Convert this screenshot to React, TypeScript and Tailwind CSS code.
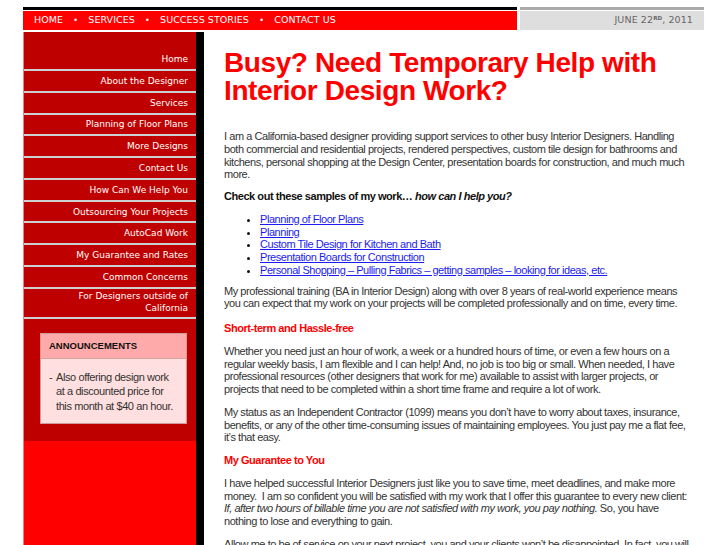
import React from "react";

const sideLinks = [
  "About the Designer",
  "Services",
  "Planning of Floor Plans",
  "More Designs",
  "Contact Us",
  "How Can We Help You",
  "Outsourcing Your Projects",
  "AutoCad Work",
  "My Guarantee and Rates",
  "Common Concerns",
];

const samples = [
  "Planning of Floor Plans",
  "Planning",
  "Custom Tile Design for Kitchen and Bath",
  "Presentation Boards for Construction",
  "Personal Shopping – Pulling Fabrics – getting samples – looking for ideas, etc.",
];

const topNav = ["HOME", "SERVICES", "SUCCESS STORIES", "CONTACT US"];

export default function App() {
  return (
    <div className="min-h-[545px] bg-white pt-[7px]">
      <div className="ml-[23px] w-[681px]">
        {/* Top bar */}
        <div className="flex gap-[3px]">
          <div className="w-[494px] border-t-[3px] border-black">
            <div className="mt-px flex h-[19px] items-center bg-[#ff0000] pl-[11px] text-[9.5px] tracking-[0.05px] text-white [font-family:'DejaVu_Sans',sans-serif]">
              {topNav.map((item, i) => (
                <React.Fragment key={item}>
                  {i > 0 && <span className="mx-[10.25px] text-[8px]">•</span>}
                  <span>{item}</span>
                </React.Fragment>
              ))}
            </div>
          </div>
          <div className="w-[184px] border-t-[3px] border-[#aaa]">
            <div className="mt-px flex h-[19px] items-center justify-end bg-[#dedede] pr-[11px] text-[9.5px] tracking-[0.1px] text-[#666] [font-family:'DejaVu_Sans',sans-serif]">
              JUNE 22<sup className="text-[5.5px] font-bold">RD</sup>, 2011
            </div>
          </div>
        </div>

        <div className="mt-[2px] flex">
          {/* Sidebar */}
          <div className="w-[173px] shrink-0 border-l border-[#f08080] bg-[#ff0000]">
            <div className="bg-[#bf0000] pb-[17px]">
              <nav className="text-right text-[9px] leading-[12px] text-white [font-family:'DejaVu_Sans',sans-serif]">
                <a className="block border-b-2 border-[#cfcfcf] pb-[4px] pr-[8px] pt-[21px]">Home</a>
                {sideLinks.map((l) => (
                  <a key={l} className="block border-b-2 border-[#cfcfcf] py-[3.9px] pr-[8px]">
                    {l}
                  </a>
                ))}
                <a className="block border-b-2 border-[#cfcfcf] pb-[2px] pt-px pr-[8px] leading-[12.5px]">
                  For Designers outside of
                  <br />
                  California
                </a>
              </nav>
              <div className="ml-[16px] mt-[14px] w-[147px] border border-[#d49a9a] [font-family:'Liberation_Sans',Arial,sans-serif]">
                <div className="flex h-[25px] items-center border-b border-[#d9a0a0] bg-[#ffaaaa] pl-[8px] text-[9.5px] font-bold text-[#111]">
                  ANNOUNCEMENTS
                </div>
                <div className="bg-[#ffdfdf] pb-[10px] pl-[8px] pt-[11px] text-[11px] leading-[14.5px] tracking-[-0.4px] text-[#333]">
                  <div className="flex">
                    <span className="w-[7px] shrink-0">-</span>
                    <span className="w-[120px]">
                      Also offering design work at a discounted price for this month at $40 an hour.
                    </span>
                  </div>
                </div>
              </div>
            </div>
          </div>
          <div className="w-[8px] shrink-0 bg-black" />

          {/* Content */}
          <main className="flex-1 pl-[20px] pr-[12px] pt-[17px] text-[11px] leading-[12.75px] tracking-[-0.45px] text-[#333] [font-family:'Liberation_Sans',Arial,sans-serif]">
            <h1 className="text-[28px] font-bold leading-[28px] tracking-[-0.4px] text-[#ff0000]">
              Busy? Need Temporary Help with Interior Design Work?
            </h1>
            <p className="mt-[25px]">
              I am a California-based designer providing support services to other busy Interior Designers. Handling
              both commercial and residential projects, rendered perspectives, custom tile design for bathrooms and
              kitchens, personal shopping at the Design Center, presentation boards for construction, and much much
              more.
            </p>
            <p className="mt-[9px] font-bold text-[#111]">
              Check out these samples of my work… <em>how can I help you?</em>
            </p>
            <ul className="mt-[10px] list-disc pl-[36px] text-[#1c1cf0]">
              {samples.map((s) => (
                <li key={s} className="marker:text-[#111]">
                  <a className="underline">{s}</a>
                </li>
              ))}
            </ul>
            <p className="mt-[8px]">
              My professional training (BA in Interior Design) along with over 8 years of real-world experience means
              you can expect that my work on your projects will be completed professionally and on time, every time.
            </p>
            <p className="mt-[12px] font-bold text-[#ff0000]">Short-term and Hassle-free</p>
            <p className="mt-[10px]">
              Whether you need just an hour of work, a week or a hundred hours of time, or even a few hours on a
              regular weekly basis, I am flexible and I can help! And, no job is too big or small. When needed, I have
              professional resources (other designers that work for me) available to assist with larger projects, or
              projects that need to be completed within a short time frame and require a lot of work.
            </p>
            <p className="mt-[10px]">
              My status as an Independent Contractor (1099) means you don’t have to worry about taxes, insurance,
              benefits, or any of the other time-consuming issues of maintaining employees. You just pay me a flat fee,
              it’s that easy.
            </p>
            <p className="mt-[10px] font-bold text-[#ff0000]">My Guarantee to You</p>
            <p className="mt-[10px]">
              I have helped successful Interior Designers just like you to save time, meet deadlines, and make more
              money.&nbsp; I am so confident you will be satisfied with my work that I offer this guarantee to every new client:{" "}
              <em>If, after two hours of billable time you are not satisfied with my work, you pay nothing.</em> So, you
              have nothing to lose and everything to gain.
            </p>
            <p className="mt-[10px]">
              Allow me to be of service on your next project, you and your clients won’t be disappointed. In fact, you
              will wonder how you ever managed without me.
            </p>
          </main>
        </div>
      </div>
    </div>
  );
}
